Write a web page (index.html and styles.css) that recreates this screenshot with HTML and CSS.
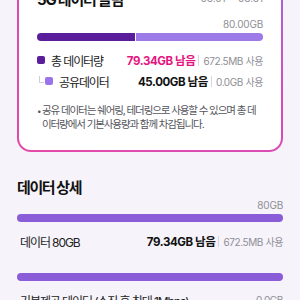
FILE: index.html
```html
<!DOCTYPE html>
<html lang="ko">
<head>
<meta charset="utf-8">
<link rel="stylesheet" href="styles.css">
</head>
<body>
<div class="page">
  <section class="card">
    <div class="card-head">
      <h2 class="plan">5G 데이터 슬림</h2>
      <span class="period">03.01 ~ 03.31</span>
    </div>
    <div class="cap">80.00GB</div>
    <div class="bar split">
      <span class="used" style="width:43.5%"></span>
      <span class="rest"></span>
    </div>
    <ul class="legend">
      <li class="row">
        <span class="sw dark"></span>
        <span class="label">총 데이터량</span>
        <span class="val pink">79.34GB 남음</span>
        <span class="sep"></span>
        <span class="usage">672.5MB 사용</span>
      </li>
      <li class="row sub">
        <span class="elbow"></span>
        <span class="sw light"></span>
        <span class="label">공유데이터</span>
        <span class="val">45.00GB 남음</span>
        <span class="sep"></span>
        <span class="usage">0.0GB 사용</span>
      </li>
    </ul>
    <p class="note"><span class="dot">•</span><span class="note-text">공유 데이터는 쉐어링, 테더링으로 사용할 수 있으며 총 데이터량에서 기본사용량과 함께 차감됩니다.</span></p>
  </section>

  <section class="detail">
    <h3 class="detail-title">데이터 상세</h3>
    <div class="cap">80GB</div>
    <div class="bar full"></div>
    <div class="drow">
      <span class="label">데이터 80GB</span>
      <span class="val">79.34GB 남음</span>
      <span class="sep"></span>
      <span class="usage">672.5MB 사용</span>
    </div>
    <div class="bar full gap"></div>
    <div class="drow">
      <span class="label">기본제공 데이터 (소진 후 최대 1Mbps)</span>
      <span class="usage">0.0GB</span>
    </div>
  </section>
</div>
</body>
</html>
```

FILE: styles.css
```css
html, body {
  margin: 0;
  overflow: hidden;
}
body {
  background: #f6f3fa;
  font-family: "Inter", "Noto Sans CJK KR", sans-serif;
  color: #222;
}
.page {
  padding: 0 17px;
  margin-top: -32px;
}
.card {
  background:
    linear-gradient(#fff, #fff) padding-box,
    linear-gradient(225deg, #9f68dc 0%, #d84cb8 30%, #e34aa8 100%) border-box;
  border: 2px solid transparent;
  border-radius: 14px;
  padding: 18px;
}
.card-head {
  display: flex;
  justify-content: space-between;
  align-items: center;
  height: 20px;
}
.plan {
  margin: 0;
  font-size: 15px;
  font-weight: 700;
  letter-spacing: -1.2px;
  color: #111;
}
.period {
  font-size: 10px;
  color: #8e8e96;
}
.cap {
  text-align: right;
  font-size: 10px;
  line-height: 14px;
  color: #8e8e96;
  letter-spacing: -0.2px;
}
.card .cap {
  margin-top: 9px;
}
.bar {
  height: 8px;
  border-radius: 4px;
  margin-top: 2px;
  display: flex;
  overflow: hidden;
}
.bar .used {
  background: #5a1d9c;
}
.bar .rest {
  flex: 1;
  margin-left: 1px;
  background: #9c7ae8;
}
.bar.full {
  background: #8a5cd7;
}
.bar.gap {
  margin-top: 22px;
}
.legend {
  list-style: none;
  margin: 9px 0 0;
  padding: 0;
  display: grid;
  row-gap: 1px;
}
.row, .drow {
  display: flex;
  align-items: center;
  height: 20px;
}
.sw {
  width: 8px;
  height: 8px;
  border-radius: 2px;
  margin-right: 6px;
}
.sw.dark { background: #5a1d9c; }
.sw.light { background: #9c72ea; }
.row.sub {
  padding-left: 2px;
}
.elbow {
  width: 4px;
  height: 6px;
  border-left: 1px solid #cfcfd6;
  border-bottom: 1px solid #cfcfd6;
  margin-right: 1px;
  transform: translateY(-2px);
}
.label {
  flex: 1;
  font-size: 12px;
  letter-spacing: -1.1px;
  color: #222;
  white-space: nowrap;
  overflow: hidden;
}
.val {
  font-size: 11.5px;
  font-weight: 700;
  letter-spacing: -0.4px;
  color: #111;
}
.val.pink { color: #e5157f; }
.sep {
  width: 1px;
  height: 11px;
  background: #d6d6dc;
  margin: 0 4px 0 3px;
}
.usage {
  font-size: 10px;
  color: #8e8e96;
  letter-spacing: -0.4px;
}
.note {
  margin: 13px 0 0;
  padding-right: 4px;
  display: flex;
  font-size: 10.5px;
  line-height: 14px;
  color: #55555d;
  letter-spacing: -1.1px;
}
.dot {
  width: 5px;
  flex: none;
  letter-spacing: 0;
  font-size: 8px;
}
.detail {
  margin-top: 25px;
}
.detail-title {
  margin: 0;
  font-size: 15px;
  font-weight: 700;
  line-height: 22px;
  letter-spacing: -1.4px;
  color: #111;
}
.detail .cap {
  margin-top: -1px;
}
.drow {
  margin-top: 9px;
  padding-left: 3px;
}
```
